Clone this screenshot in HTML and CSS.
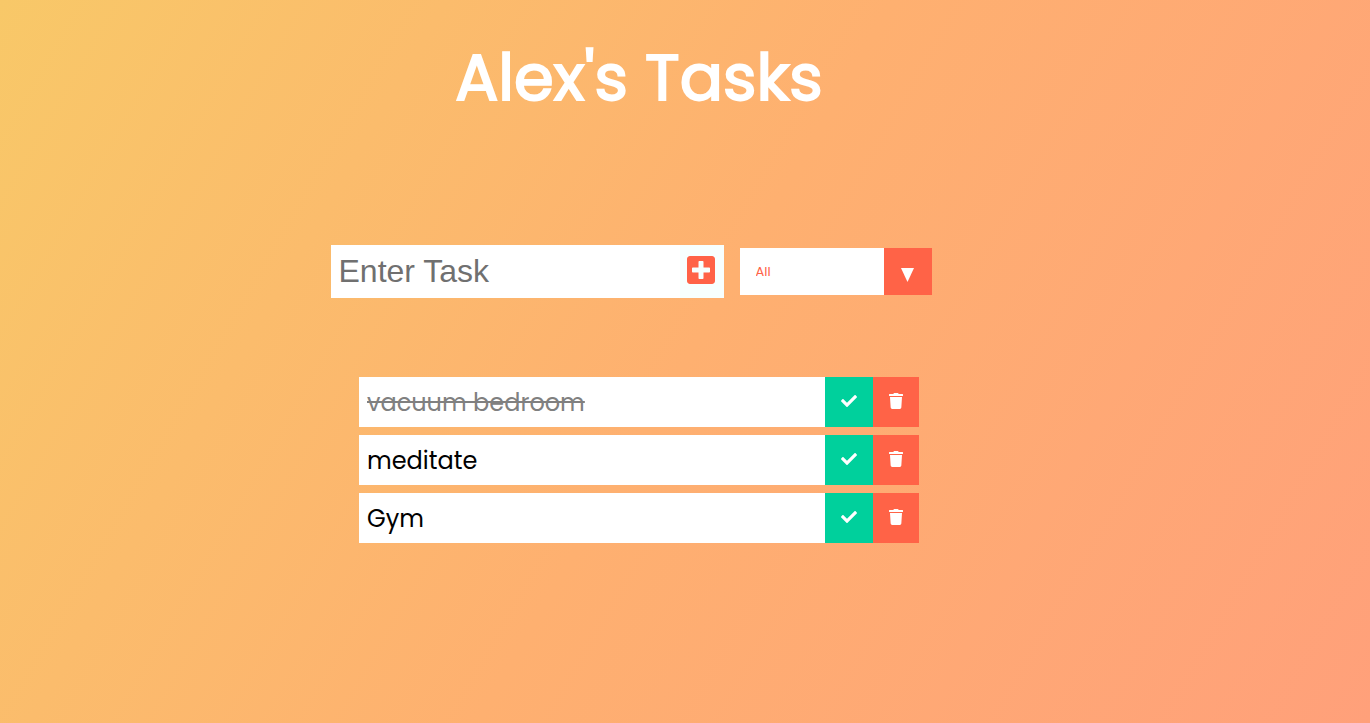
FILE: index.html
```html
<!DOCTYPE html>
<html lang="en">
<head>
<meta charset="utf-8">
<meta name="viewport" content="width=device-width, initial-scale=1">
<title>Alex's Tasks</title>
<link rel="stylesheet" href="styles.css">
</head>
<body>
<svg class="sprite" aria-hidden="true">
  <symbol id="check" viewBox="0 0 512 512"><path d="M173.898 439.404l-166.4-166.4c-9.997-9.997-9.997-26.206 0-36.204l36.203-36.204c9.997-9.998 26.207-9.998 36.204 0L192 312.69 432.095 72.596c9.997-9.997 26.207-9.997 36.204 0l36.203 36.204c9.997 9.997 9.997 26.206 0 36.204l-294.4 294.401c-9.998 9.997-26.207 9.997-36.204-.001z"/></symbol>
  <symbol id="trash" viewBox="0 0 448 512"><path d="M432 32H312l-9.400-18.700A24 24 0 0 0 281.100 0H166.800a23.720 23.720 0 0 0-21.400 13.300L136 32H16A16 16 0 0 0 0 48v32a16 16 0 0 0 16 16h416a16 16 0 0 0 16-16V48a16 16 0 0 0-16-16zM53.200 467a48 48 0 0 0 47.900 45h245.800a48 48 0 0 0 47.900-45L416 128H32z"/></symbol>
  <symbol id="plus" viewBox="0 32 448 448"><path d="M400 32H48C21.500 32 0 53.500 0 80v352c0 26.500 21.500 48 48 48h352c26.500 0 48-21.500 48-48V80c0-26.500-21.500-48-48-48zm-32 252c0 6.600-5.400 12-12 12h-92v92c0 6.600-5.400 12-12 12h-56c-6.600 0-12-5.400-12-12v-92H92c-6.600 0-12-5.400-12-12v-56c0-6.600 5.400-12 12-12h92v-92c0-6.600 5.400-12 12-12h56c6.600 0 12 5.400 12 12v92h92c6.600 0 12 5.400 12 12v56z"/></symbol>
</svg>
<div class="page">
  <header class="header"><h1 class="title">Alex's Tasks</h1></header>
  <form class="task-form">
    <div class="entry">
      <input class="task-input" type="text" placeholder="Enter Task" aria-label="Enter Task">
      <button class="add-button" type="button" aria-label="Add task"><svg class="icon-plus"><use href="#plus"/></svg></button>
    </div>
    <div class="filter">
      <select class="filter-select" aria-label="Filter tasks">
        <option>All</option>
        <option>Completed</option>
        <option>Uncompleted</option>
      </select>
      <span class="filter-arrow" aria-hidden="true"><svg class="icon-arrow" viewBox="0 0 13 14"><path d="M0 0h13L6.500 14z"/></svg></span>
    </div>
  </form>
  <ul class="task-list">
    <li class="task task-done">
      <span class="task-name">vacuum bedroom</span>
      <button class="task-button complete" type="button" aria-label="Complete"><svg class="icon-check"><use href="#check"/></svg></button>
      <button class="task-button delete" type="button" aria-label="Delete"><svg class="icon-trash"><use href="#trash"/></svg></button>
    </li>
    <li class="task">
      <span class="task-name">meditate</span>
      <button class="task-button complete" type="button" aria-label="Complete"><svg class="icon-check"><use href="#check"/></svg></button>
      <button class="task-button delete" type="button" aria-label="Delete"><svg class="icon-trash"><use href="#trash"/></svg></button>
    </li>
    <li class="task">
      <span class="task-name">Gym</span>
      <button class="task-button complete" type="button" aria-label="Complete"><svg class="icon-check"><use href="#check"/></svg></button>
      <button class="task-button delete" type="button" aria-label="Delete"><svg class="icon-trash"><use href="#trash"/></svg></button>
    </li>
  </ul>
</div>
</body>
</html>
```
FILE: styles.css
```css
* {
  box-sizing: border-box;
}

body {
  margin: 0;
  min-height: 100vh;
  background: linear-gradient(120deg, #f8c868, #feb070 50%, #ffa07a);
  font-family: Poppins, Inter, sans-serif;
}

button,
input,
select {
  border: 0;
  border-radius: 0;
  margin: 0;
  padding: 0;
  outline: 0;
}

svg {
  display: block;
  fill: currentColor;
}

.sprite {
  position: absolute;
  width: 0;
  height: 0;
}

.page {
  display: flex;
  flex-direction: column;
  align-items: center;
  padding: 30px 92px 48px 0;
}

.title {
  margin: 0;
  color: white;
  font-size: 64px;
  font-weight: 400;
  line-height: 96px;
  -webkit-text-stroke: 2px white;
}

.task-form {
  display: flex;
  align-items: center;
  margin-top: 119px;
}

.entry {
  display: flex;
}

.task-input {
  width: 349px;
  height: 53px;
  padding: 8px;
  background: white;
  font-family: "Liberation Sans", Arial, sans-serif;
  font-size: 32px;
}

.task-input::placeholder {
  color: #707070;
}

.add-button {
  display: grid;
  place-items: center;
  width: 44px;
  padding: 0 2px 3px 0;
  background: #f7fffe;
  color: #ff6347;
}

.icon-plus {
  width: 28px;
  height: 28px;
}

.filter {
  display: grid;
  grid-template-columns: 1fr 48px;
  width: 192px;
  height: 47px;
  margin: 0 16px;
}

.filter-select {
  grid-area: 1 / 1 / 2 / 3;
  appearance: none;
  padding: 0 64px 0 16px;
  background: white;
  color: #ff6347;
  font-family: inherit;
  font-size: 13px;
  cursor: pointer;
}

.filter-arrow {
  grid-area: 1 / 2;
  display: grid;
  place-items: center;
  padding-top: 6px;
  background: #ff6347;
  color: white;
  pointer-events: none;
}

.icon-arrow {
  width: 13px;
  height: 14px;
}

.task-list {
  display: grid;
  gap: 8px;
  width: 100%;
  max-width: 560px;
  margin: 79px 0 0;
  padding: 0;
  list-style: none;
}

.task {
  display: flex;
  background: white;
  color: black;
  font-size: 24px;
}

.task-name {
  flex: 1;
  padding: 8px 8px 6px;
  line-height: 36px;
}

.task-done .task-name {
  color: #808080;
  text-decoration: line-through;
}

.task-button {
  padding: 0 16px 2px;
  color: white;
}

.complete {
  background: #00d09c;
}

.delete {
  background: #ff6347;
}

.icon-check {
  width: 16px;
  height: 16px;
}

.icon-trash {
  width: 14px;
  height: 16px;
}
```
